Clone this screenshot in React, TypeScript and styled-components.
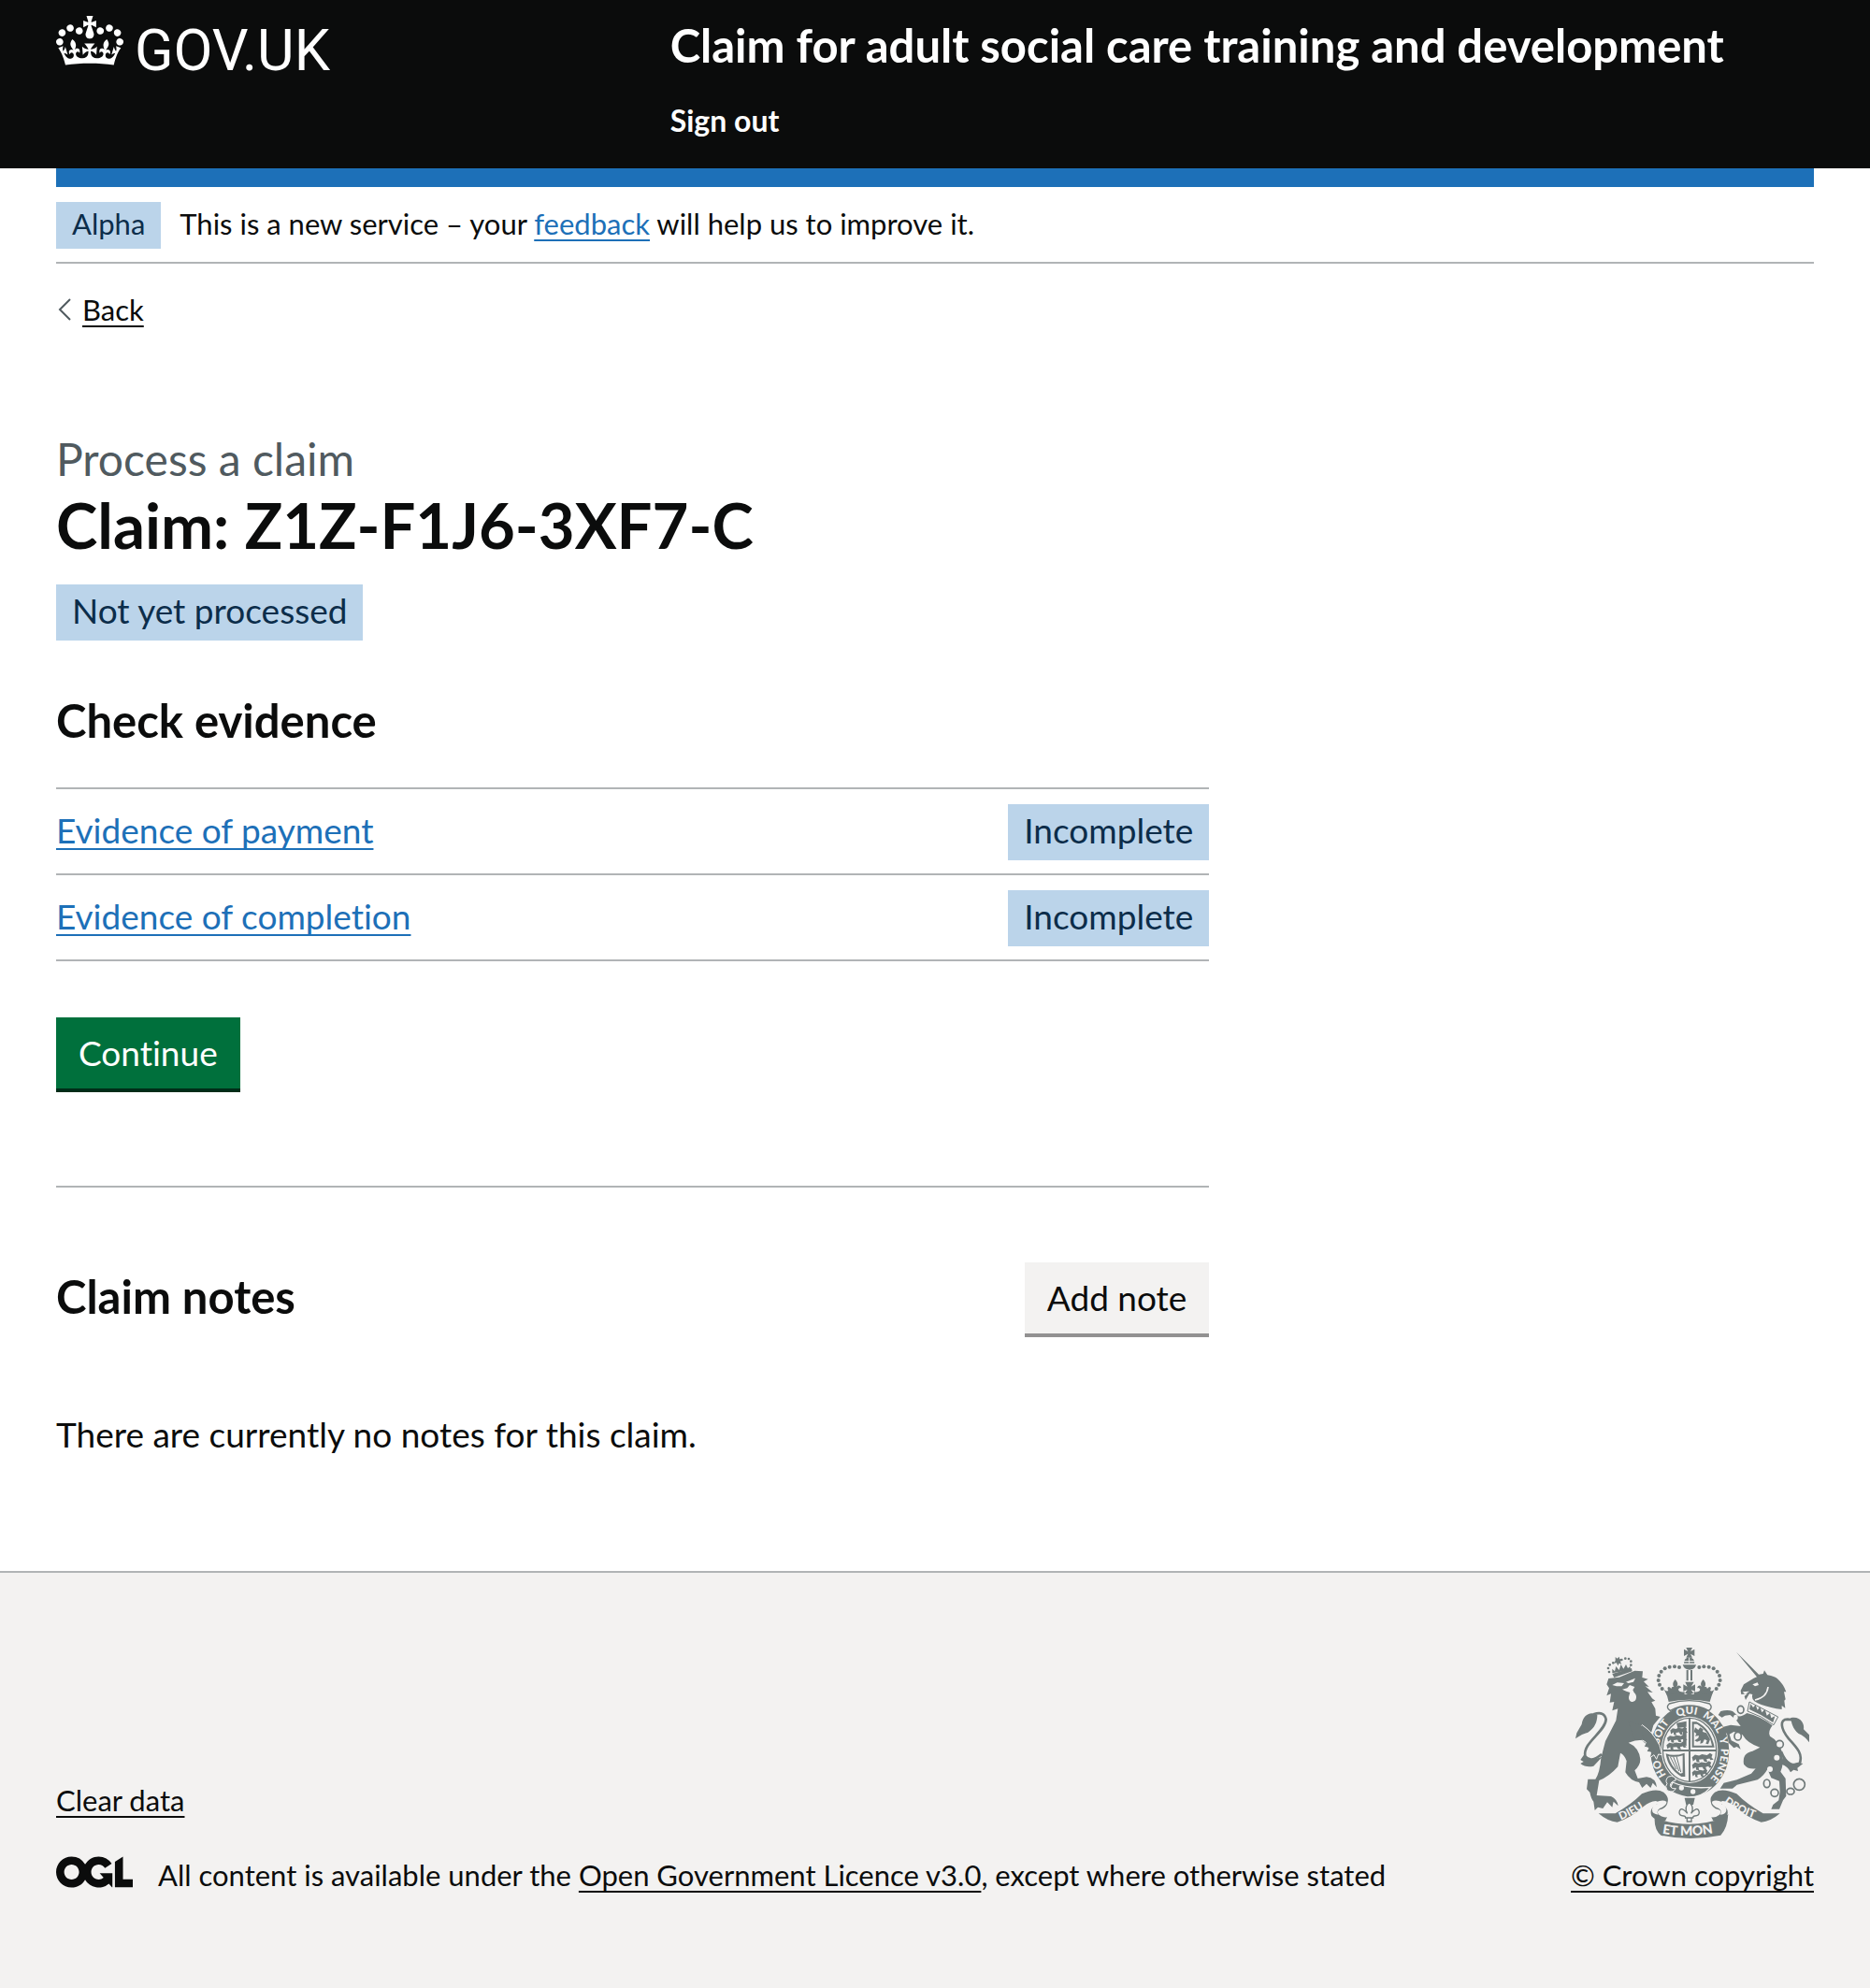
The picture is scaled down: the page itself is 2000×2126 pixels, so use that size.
import React from "react";
import styled, { createGlobalStyle, css } from "styled-components";

const colour = {
  black: "#0b0c0c",
  white: "#ffffff",
  blue: "#1d70b8",
  secondary: "#505a5f",
  border: "#b1b4b6",
  canvas: "#f3f2f1",
  tag: "#bbd4ea",
  tagText: "#0c2d4a",
  green: "#00703c",
  greenShadow: "#002d18",
  greyShadow: "#929191",
  crest: "#6f7979",
};

const GlobalStyle = createGlobalStyle`
  *, *::before, *::after { box-sizing: border-box; }
  html { background: ${colour.canvas}; }
  body {
    margin: 0;
    background: ${colour.white};
    color: ${colour.black};
    font-family: Lato, "Liberation Sans", sans-serif;
    font-size: 37px;
    font-variant-ligatures: none;
    line-height: 50px;
  }
  h1, h2, p, ul { margin: 0; padding: 0; }
`;

const smallText = css`
  font-size: 31px;
  line-height: 40px;
`;

const headingText = css`
  font-size: 49px;
  font-weight: 700;
  line-height: 62px;
`;

const Header = styled.header`
  background: ${colour.black};
  color: ${colour.white};
  padding: 17px 60px 31px;
`;

const HeaderGrid = styled.div`
  display: grid;
  grid-template-columns: calc(100% / 3 + 30px) 1fr;
`;

const HomeLink = styled.a`
  display: inline-flex;
  align-items: flex-start;
  gap: 12px;
  color: inherit;
  text-decoration: none;
`;

const Wordmark = styled.span`
  padding-top: 6px;
  font-family: Roboto, sans-serif;
  font-size: 61px;
  line-height: 62px;
`;

const Service = styled.div`
  display: flex;
  flex-direction: column;
  align-items: flex-start;
  gap: 30px;
`;

const ServiceLink = styled.a`
  ${headingText}
  color: inherit;
  text-decoration: none;
`;

const NavLink = styled.a`
  color: inherit;
  font-size: 32px;
  font-weight: 700;
  line-height: 40px;
  text-decoration: none;
`;

const Container = styled.div`
  margin: 0 60px;
`;

const BrandBar = styled.div`
  height: 20px;
  background: ${colour.blue};
`;

const PhaseBanner = styled.div`
  ${smallText}
  display: flex;
  align-items: baseline;
  gap: 20px;
  padding: 16px 0 14px;
  border-bottom: 2px solid ${colour.border};
`;

const Tag = styled.strong`
  display: inline-block;
  flex: none;
  padding: 3px 17px 7px;
  background: ${colour.tag};
  color: ${colour.tagText};
  font-weight: 400;
`;

const Link = styled.a<{ $plain?: boolean }>`
  color: ${(p) => (p.$plain ? colour.black : colour.blue)};
  text-decoration: underline;
  text-decoration-thickness: 2px;
  text-decoration-skip-ink: none;
  text-underline-offset: 5px;
`;

const BackRow = styled.nav`
  ${smallText}
  display: flex;
  align-items: center;
  padding-top: 29px;
`;

const Main = styled.main`
  width: calc((100% + 60px) * 2 / 3 - 60px);
  padding: 109px 0 121px;
`;

const Caption = styled.span`
  display: block;
  color: ${colour.secondary};
  font-size: 48px;
  line-height: 62px;
`;

const Title = styled.h1`
  margin-bottom: 25px;
  font-size: 67px;
  font-weight: 700;
  line-height: 78px;
`;

const Status = styled.p`
  display: flex;
  margin-bottom: 54px;
`;

const Subtitle = styled.h2`
  ${headingText}
`;

const TaskList = styled.ul`
  margin: 41px 0 60px;
  list-style: none;
  border-top: 2px solid ${colour.border};
`;

const Task = styled.li`
  display: flex;
  align-items: baseline;
  justify-content: space-between;
  padding: 16px 0 14px;
  border-bottom: 2px solid ${colour.border};
`;

const Button = styled.button<{ $secondary?: boolean }>`
  display: block;
  padding: 13px 24px;
  border: 0;
  border-bottom: 4px solid ${(p) => (p.$secondary ? colour.greyShadow : colour.greenShadow)};
  border-radius: 0;
  background: ${(p) => (p.$secondary ? colour.canvas : colour.green)};
  color: ${(p) => (p.$secondary ? colour.black : colour.white)};
  font: inherit;
  cursor: pointer;
`;

const SectionBreak = styled.hr`
  height: 2px;
  margin: 100px 0 80px;
  border: 0;
  background: ${colour.border};
`;

const NotesHeader = styled.div`
  display: flex;
  align-items: center;
  justify-content: space-between;
  margin-bottom: 79px;

  ${Subtitle} { padding-bottom: 8px; }
`;

const Footer = styled.footer`
  ${smallText}
  display: flex;
  align-items: flex-end;
  justify-content: space-between;
  padding: 80px 60px 100px;
  border-top: 2px solid ${colour.border};
  background: ${colour.canvas};
`;

const FooterMeta = styled.div`
  display: flex;
  flex-direction: column;
  align-items: flex-start;
  gap: 40px;
`;

const Licence = styled.div`
  display: flex;
  align-items: flex-start;
  gap: 27px;
`;

const Copyright = styled.div`
  display: flex;
  flex-direction: column;
  align-items: center;
  gap: 19px;
`;

const Motto = styled.text`
  fill: ${colour.canvas};
  font-family: Lato, sans-serif;
  font-weight: 900;
`;

const Crown = () => (
  <svg width="72" height="53" viewBox="0 0 132 97" fill="currentColor" aria-hidden="true">
    <path d="M25 30.2c3.5 1.5 7.7-.2 9.1-3.7 1.5-3.6-.2-7.8-3.9-9.2-3.6-1.4-7.6.3-9.1 3.9-1.4 3.5.3 7.5 3.9 9zM9 39.5c3.6 1.5 7.8-.2 9.2-3.7 1.5-3.6-.2-7.8-3.9-9.1-3.6-1.5-7.6.2-9.1 3.8-1.4 3.5.3 7.5 3.8 9zM4.4 57.2c3.5 1.5 7.7-.2 9.1-3.8 1.5-3.6-.2-7.7-3.9-9.1-3.5-1.5-7.6.3-9.1 3.8-1.4 3.5.3 7.6 3.9 9.1zm38.3-21.4c3.5 1.5 7.7-.2 9.1-3.8 1.5-3.6-.2-7.7-3.9-9.1-3.6-1.5-7.6.3-9.1 3.8-1.3 3.6.4 7.7 3.9 9.1zm64.4-5.6c-3.6 1.5-7.8-.2-9.1-3.7-1.5-3.6.2-7.8 3.8-9.2 3.6-1.4 7.7.3 9.2 3.9 1.3 3.5-.4 7.5-3.9 9zm15.9 9.3c-3.6 1.5-7.7-.2-9.1-3.7-1.5-3.6.2-7.8 3.7-9.1 3.6-1.5 7.7.2 9.2 3.8 1.5 3.5-.3 7.5-3.8 9zm4.7 17.7c-3.6 1.5-7.8-.2-9.2-3.8-1.5-3.6.2-7.7 3.9-9.1 3.6-1.5 7.7.3 9.2 3.8 1.3 3.5-.4 7.6-3.9 9.1zM89.3 35.8c-3.6 1.5-7.8-.2-9.2-3.8-1.4-3.6.2-7.7 3.9-9.1 3.6-1.5 7.7.3 9.2 3.8 1.4 3.6-.3 7.7-3.9 9.1zM69.7 17.7l8.9 4.7V9.3l-8.9 2.8c-.2-.3-.5-.6-.9-.9L72.4 0H59.6l3.5 11.2c-.3.3-.6.5-.9.9l-8.8-2.8v13.1l8.8-4.7c.3.3.6.7.9.9l-5 15.4v.1c-.2.8-.4 1.6-.4 2.4 0 4.1 3.1 7.5 7 8.1h.2c.3 0 .7.1 1 .1.4 0 .7 0 1-.1h.2c4-.6 7.1-4.1 7.1-8.1 0-.8-.1-1.7-.4-2.4V34l-5.1-15.4c.4-.2.7-.6 1-.9zM66 92.8c16.9 0 32.8 1.1 47.1 3.2 4-16.9 8.9-26.7 14-33.5l-9.6-3.4c1 4.9 1.1 7.2 0 10.2-1.5-1.4-3-4.3-4.2-8.7L108.6 76c2.8-2 5-3.2 7.5-3.3-4.4 9.4-10 11.9-13.6 11.2-4.3-.8-6.3-4.6-5.6-7.9 1-4.7 5.7-5.9 8-.5 4.3-8.7-3-11.4-7.6-8.8 7.1-7.2 7.9-13.5 2.1-21.1-8 6.1-8.1 12.3-4.5 20.8-4.7-5.4-12.1-2.5-9.5 6.2 3.4-5.2 7.9-2 7.2 3.1-.6 4.3-6.4 7.8-13.5 7.2-10.3-.9-10.9-8-11.2-13.8 2.5-.5 7.1 1.8 11 7.3L80.2 60c-4.1 4.4-8 5.3-12.3 5.4 1.4-4.4 8-11.6 8-11.6H55.5s6.4 7.2 7.9 11.6c-4.2-.1-8-1-12.3-5.4l1.4 16.4c3.9-5.5 8.5-7.7 10.9-7.3-.3 5.8-.9 12.8-11.1 13.8-7.2.6-12.9-2.9-13.5-7.2-.7-5 3.8-8.3 7.1-3.1 2.7-8.7-4.6-11.6-9.4-6.2 3.7-8.5 3.6-14.7-4.6-20.8-5.8 7.6-5 13.9 2.2 21.1-4.7-2.6-11.9.1-7.7 8.8 2.3-5.5 7.1-4.2 8.1.5.7 3.3-1.3 7.1-5.7 7.9-3.5.7-9-1.8-13.5-11.2 2.5.1 4.7 1.3 7.5 3.3l-4.7-15.4c-1.2 4.4-2.7 7.2-4.3 8.7-1.1-3-.9-5.3 0-10.2l-9.5 3.4c5 6.9 9.9 16.7 14 33.5 14.8-2.1 30.8-3.2 47.7-3.2z" />
  </svg>
);

const Chevron = () => (
  <svg width="28" height="24" viewBox="0 0 28 24" fill="none" stroke={colour.secondary} strokeWidth="2" aria-hidden="true">
    <path d="M15 1L4 12l11 11" />
  </svg>
);

const LicenceLogo = () => (
  <svg width="82" height="34" viewBox="0 0 483.2 195.7" fill="currentColor" aria-hidden="true">
    <path d="M421.5 142.8V.1l-50.7 32.3v161.1h112.4v-50.7zm-122.3-9.6A47.12 47.12 0 0 1 221 97.8c0-26 21.1-47.1 47.1-47.1 16.7 0 31.4 8.7 39.7 21.8l42.7-27.2A97.63 97.63 0 0 0 268.1 0c-36.5 0-68.3 20.1-85.1 49.7A98 98 0 0 0 97.8 0C43.9 0 0 43.9 0 97.8s43.9 97.8 97.8 97.8c36.5 0 68.3-20.1 85.1-49.7a97.76 97.76 0 0 0 149.6 25.4l19.4 22.2h3v-87.8h-80l24.3 27.5zM97.8 145c-26 0-47.1-21.1-47.1-47.1s21.1-47.1 47.1-47.1 47.1 21.1 47.1 47.1S123.8 145 97.8 145" />
  </svg>
);

const archPearls = [
  [405, 129], [390, 127], [374, 128], [359, 133],
  [347, 143], [340, 156], [338, 171], [342, 185], [350, 198],
];

const lionPearls = [
  [180, 144], [177, 132], [182, 121], [193, 115],
  [220, 105], [232, 101], [243, 102], [250, 110], [250, 122],
];

const garterWords = [
  { word: "HO", at: "13%" },
  { word: "SOIT", at: "28%" },
  { word: "QUI", at: "44%" },
  { word: "MAL", at: "56%" },
  { word: "Y", at: "69%" },
  { word: "PENSE", at: "74%" },
];

const passant = "M0 8l6-6 8 2 6-3 10 2 6-5 5 4-2 6 4 6-6 1-2-4-6 2 2 7-6-1-3-6-8 1 1 7-6-1-1-7-6 5z";

const CrownArch = () => (
  <g>
    {archPearls.map(([x, y]) => (
      <circle key={x} cx={x} cy={y} r="6" />
    ))}
    <path d="M392 168q14 14 4 24 12-10 16 4-7-3-10 4 2 10 20 8v14h-54l-12-22q8 8 14 4-5-8 0-12 6 0 9 6 2-8 9-6-9-10 4-24z" />
  </g>
);

const Scroll = () => (
  <g>
    <path d="M146 598L200 598Q250 570 285 535Q330 515 355 530Q372 545 368 560Q366 580 342 586Q330 592 340 602Q352 612 366 610L360 622Q330 624 316 606Q308 584 328 572Q344 562 330 558Q310 560 290 576Q250 612 206 626Q176 624 146 598Z" />
    <path d="M330 562Q352 552 364 560Q366 572 342 582Q330 590 338 602Q316 600 318 584Q320 572 334 568Z" fill={colour.canvas} />
  </g>
);

const Lion = () => (
  <g>
    <path d="M172 184L178 165L212 161L262 140L288 142L286 162L305 167L291 175L308 192L296 190L320 210L303 208L318 229L328 236L316 241L328 262L330 284L344 288L322 315L312 350L316 376L300 378L285 362Q262 362 242 371Q276 386 280 424Q280 444 262 460L272 486L300 481Q330 484 333 514L320 500L313 516L300 503L286 516L276 498Q248 494 232 466L236 430Q230 410 216 404L208 448Q180 480 148 492L140 540L186 543Q206 552 209 574L194 560L190 578L174 562L160 582L144 578L134 588L130 560Q122 550 118 530L108 520L112 488L136 488Q150 468 154 420L168 366L202 300L208 262L190 268L196 240L182 242L186 214L172 220L180 196Z" />
    <path d="M190 186l16-8 22 2-8 10h-16zM234 176l30-12-6 12-16 4z" fill={colour.canvas} />
    <path d="M222 200l16-4 8-10 16 6-6 10 4 8q10 8 6 22-4 10-14 8-10-4-9-16l4-14-12-4z" fill={colour.canvas} />
    <path d="M190 150L252 132L254 142L196 162Z" />
    <path d="M190 148l0-14 8 8 4-16 10 12 6-18 8 14 8-14 6 12 8-6v12z" />
    {lionPearls.map(([x, y]) => (
      <circle key={`${x}-${y}`} cx={x} cy={y} r="4" />
    ))}
    <path d="M200 96l6 5 6-6 2 8 8 0-6 8 4 8-8-3-4 8-4-9-9 1 5-8z" />
    <path d="M156 408Q120 438 103 414C94 372 168 336 170 296Q164 268 130 280" fill="none" stroke={colour.crest} strokeWidth="8" />
    <path d="M142 282C116 268 96 286 92 312L76 340L72 358Q94 342 112 338C134 324 142 304 142 282ZM103 404L88 426L98 432L88 438Q106 452 130 446L158 416L126 426L104 420Z" />
  </g>
);

const Unicorn = () => (
  <g>
    <path d="M588 80L660 152L674 150L678 139L688 154Q712 158 720 166Q740 184 748 208L741 208L746 232L742 236L745 260L734 252L734 264Q716 262 700 258Q664 250 646 238Q636 230 640 216L630 214L618 234L614 222L624 214L604 216L602 204L612 184L644 164L654 160Z" />
    <path d="M640 184l16-6 4 8-12 4zM608 208l22-2-14 10z" fill={colour.canvas} />
    <path d="M690 192Q686 226 648 234" fill="none" stroke={colour.canvas} strokeWidth="5" />
    <path d="M630 240L722 288L708 314Q668 284 624 270Z" fill={colour.canvas} stroke={colour.crest} strokeWidth="3" />
    <path d="M630 264L634 246L642 258L650 250L656 266L664 256L670 274L680 264L686 284L696 276L700 292L712 286L706 306Q668 280 630 264Z" />
    <path d="M622 276Q666 286 704 316Q688 336 696 350Q722 364 734 398Q742 440 730 464L746 486L748 542L738 556L726 584L700 584L706 570L724 556L728 528L726 494L700 484L688 456Q676 478 656 490L590 506L576 518L536 518L548 500L590 490L636 470L650 454Q626 458 612 440Q606 404 640 398L664 386Q624 374 608 346L580 336L566 344L572 364L596 376L602 392L590 384L580 388L564 372L558 342L546 334L546 320L570 314L602 318L586 296L568 282L552 284L542 290L530 282L538 270Q560 264 576 270L594 286Q606 288 622 276Z" />
    <path d="M732 400C750 446 772 444 790 440C804 410 784 388 756 358C730 326 726 296 752 296L774 298" fill="none" stroke={colour.crest} strokeWidth="8" />
    <path d="M762 292C792 284 808 310 804 328L822 346V370Q808 350 788 342C768 326 766 308 762 292ZM738 412L732 440Q754 446 762 466L772 458L786 462L784 452L802 438L786 434L762 440Z" />
    <g fill={colour.canvas} stroke={colour.crest} strokeWidth="5">
      <ellipse cx="602" cy="265" rx="10" ry="12" />
      <ellipse cx="593" cy="350" rx="11" ry="13" />
      <circle cx="727" cy="376" r="12" />
      <ellipse cx="686" cy="502" rx="10" ry="13" />
      <circle cx="711" cy="532" r="12" />
      <ellipse cx="762" cy="527" rx="12" ry="10" />
      <circle cx="790" cy="505" r="18" />
    </g>
    <g fill={colour.canvas}>
      <ellipse cx="586" cy="290" rx="7" ry="9" />
      <circle cx="718" cy="419" r="9" />
      <circle cx="696" cy="456" r="9" />
    </g>
  </g>
);

const Garter = () => (
  <g>
    <ellipse cx="439" cy="397" rx="129" ry="149" stroke={colour.canvas} strokeWidth="6" />
    <ellipse cx="438" cy="394" rx="91" ry="107" fill={colour.canvas} />
    <ellipse cx="438" cy="394" rx="86" ry="102" fill="none" stroke={colour.crest} strokeWidth="4" />
    <path d="M435 292h6v204h-6zM352 393h172v6H352z" />
    <path d={passant} transform="translate(376 322) scale(1.3 1.2)" />
    <path d={passant} transform="translate(366 346) scale(1.5 1.2)" />
    <path d={passant} transform="translate(364 369) scale(1.5 1.2)" />
    <path d={passant} transform="translate(446 407) scale(1.6 1.3)" />
    <path d={passant} transform="translate(446 432) scale(1.5 1.3)" />
    <path d={passant} transform="translate(446 457) scale(1.2 1.2)" />
    <path d="M396 308l32-6v18l-28 4zM416 330l12-6v58l-10-4z" />
    <path d="M446 304h14q46 22 58 82h-72zm6 7v69h58q-8-46-48-69z" fillRule="evenodd" />
    <path d="M456 322l10 8 6-8 10 6-2 8 12 4 12 20-6 16-8-2 4-10-8-4-6 12-8 2 2-10-12 4-8-4 12-8 2-8-12 2 4-8-8-6z" />
    <path d="M362 406q26 10 60-2l2 76h-12q-44-26-50-74zm8 8q8 34 38 56l8-2v-56q-26 8-46 2z" fillRule="evenodd" />
    <path d="M376 416l20 40M386 416l18 46M396 415l14 50" stroke={colour.crest} strokeWidth="3" />
    {garterWords.map(({ word, at }) => (
      <Motto key={word} fontSize="34">
        <textPath href="#garter" startOffset={at}>{word}</textPath>
      </Motto>
    ))}
    <path d="M384 498Q430 520 506 514Q476 548 430 546Q396 540 372 524Z" stroke={colour.canvas} strokeWidth="4" />
    <circle cx="412" cy="516" r="8" fill={colour.canvas} />
    <circle cx="449" cy="528" r="8" fill={colour.canvas} />
    <path d="M370 480Q392 474 394 492Q376 496 376 508Q378 520 394 518Q386 534 366 524Q358 510 366 502Q358 492 370 480Z" stroke={colour.canvas} strokeWidth="3" />
    {/* lion's foreleg across the garter */}
    <path d="M286 314Q322 338 342 380L350 410L338 408L332 424L324 410L310 420L314 402L300 400L306 388L292 384L298 370L286 362L270 330Z" stroke={colour.canvas} strokeWidth="3" />
    <path d="M240 300L284 316L290 362L262 362Z" />
  </g>
);

const ImperialCrown = () => (
  <g>
    <path d="M427 66h20l-6 12 13-7v22l-13-7 6 12h-20l6-12-13 7V71l13 7z" />
    <path d="M420 116q0-16 17-19 17 3 17 19z" />
    <path d="M437 98v18M420 110h34" stroke={colour.canvas} strokeWidth="3" />
    <path d="M416 121h43q-4 16-21 16t-22-16z" />
    <path d="M428 138h6v34h-6zM441 138h6v34h-6z" />
    <CrownArch />
    <g transform="translate(874 0) scale(-1 1)">
      <CrownArch />
    </g>
    <path d="M424 176h28l-9 15 13-7v22l-13-5 8 12h-28l8-12-13 5v-22l13 7z" />
    <path d="M360 206Q380 222 398 212Q420 222 437 210Q454 222 476 212Q494 222 514 206Q508 222 503 240Q437 226 371 240Q368 222 360 206Z" />
    <path d="M373 246Q437 226 502 246Q514 258 500 268Q437 236 376 268Q360 258 373 246Z" fill={colour.canvas} stroke={colour.crest} strokeWidth="4" />
  </g>
);

const RoyalArms = () => (
  <svg width="250" height="204" viewBox="72 66 750 612" fill={colour.crest} aria-hidden="true">
    <defs>
      <path id="garter" d="M439 515A100 118 0 0 1 439 279A100 118 0 0 1 439 515" />
      <path id="scroll-left" d="M218 619Q266 600 322 558" />
      <path id="scroll-right" d="M548 563Q596 600 672 622" />
      <path id="scroll-centre" d="M350 662Q437 678 528 658" />
    </defs>
    <Lion />
    <Garter />
    <ImperialCrown />
    <Unicorn />
    <Scroll />
    <g transform="translate(874 0) scale(-1 1)">
      <Scroll />
    </g>
    <path d="M326 612Q437 652 548 612L562 600Q560 644 538 668Q438 688 346 668Q324 650 326 612Z" />
    <path d="M422 548h33l-5 22h-23z" />
    <path d="M437 562q18 18 6 36 22-26 26-4 0 12-14 12-6 0-6 6h-24q0-6-6-6-14 0-14-12 4-22 26 4-12-18 6-36zM430 612h14v12h-14z" fill={colour.canvas} stroke={colour.crest} strokeWidth="4" />
    <Motto fontSize="35">
      <textPath href="#scroll-left">DIEU</textPath>
    </Motto>
    <Motto fontSize="35">
      <textPath href="#scroll-right">DROIT</textPath>
    </Motto>
    <Motto fontSize="42">
      <textPath href="#scroll-centre">ET MON</textPath>
    </Motto>
  </svg>
);

const tasks = [
  { name: "Evidence of payment", status: "Incomplete" },
  { name: "Evidence of completion", status: "Incomplete" },
];

export default function App() {
  return (
    <>
      <GlobalStyle />
      <Header>
        <HeaderGrid>
          <div>
            <HomeLink href="#">
              <Crown />
              <Wordmark>GOV.UK</Wordmark>
            </HomeLink>
          </div>
          <Service>
            <ServiceLink href="#">Claim for adult social care training and development</ServiceLink>
            <NavLink href="#">Sign out</NavLink>
          </Service>
        </HeaderGrid>
      </Header>
      <Container>
        <BrandBar />
        <PhaseBanner>
          <Tag>Alpha</Tag>
          <span>
            This is a new service – your <Link href="#">feedback</Link> will help us to improve it.
          </span>
        </PhaseBanner>
        <BackRow>
          <Chevron />
          <Link $plain href="#">Back</Link>
        </BackRow>
        <Main>
          <Caption>Process a claim</Caption>
          <Title>Claim: Z1Z-F1J6-3XF7-C</Title>
          <Status>
            <Tag>Not yet processed</Tag>
          </Status>
          <Subtitle>Check evidence</Subtitle>
          <TaskList>
            {tasks.map((task) => (
              <Task key={task.name}>
                <Link href="#">{task.name}</Link>
                <Tag>{task.status}</Tag>
              </Task>
            ))}
          </TaskList>
          <Button type="button">Continue</Button>
          <SectionBreak />
          <NotesHeader>
            <Subtitle>Claim notes</Subtitle>
            <Button type="button" $secondary>Add note</Button>
          </NotesHeader>
          <p>There are currently no notes for this claim.</p>
        </Main>
      </Container>
      <Footer>
        <FooterMeta>
          <Link $plain href="#">Clear data</Link>
          <Licence>
            <LicenceLogo />
            <span>
              All content is available under the <Link $plain href="#">Open Government Licence v3.0</Link>, except where
              otherwise stated
            </span>
          </Licence>
        </FooterMeta>
        <Copyright>
          <RoyalArms />
          <Link $plain href="#">© Crown copyright</Link>
        </Copyright>
      </Footer>
    </>
  );
}
